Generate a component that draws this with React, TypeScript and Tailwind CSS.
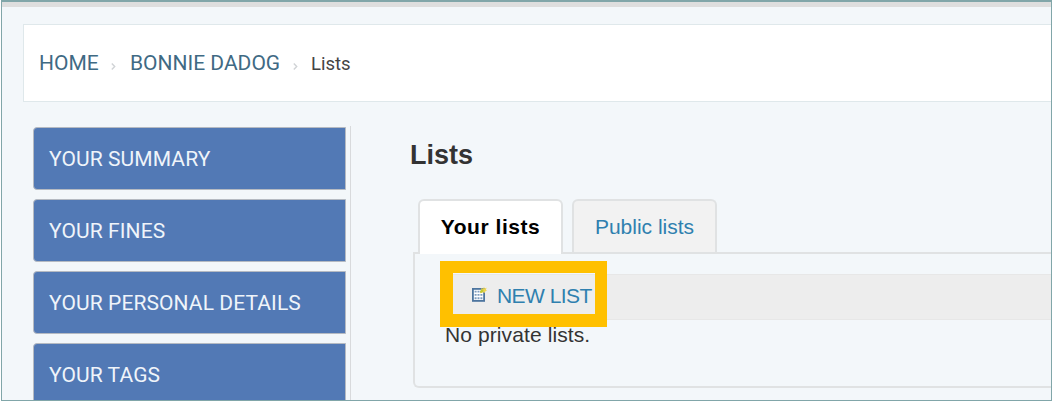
const menu = ['YOUR SUMMARY', 'YOUR FINES', 'YOUR PERSONAL DETAILS', 'YOUR TAGS'];

function NewListIcon() {
  return (
    <svg width="15" height="16" viewBox="0 0 15 16" className="mb-[3px] shrink-0">
      <rect x="0.9" y="2.9" width="11.2" height="12" fill="#fff" stroke="#4d759f" strokeWidth="1.8" />
      <path d="M2.6 5.6h7.8M2.6 8.9h7.8M2.6 12.2h7.8" stroke="#7f9dbf" strokeWidth="1.9" strokeDasharray="2 .9" />
      <path d="M9 2.2l2.2.6L12 .8l.7 1.7 1.9-.7-.7 2 1 1-1.8.6-.4 1.6-1.4-.7-2.7.9 1.1-2.5z" fill="#efd550" />
      <path d="M8 5.2l1.6-2 2 .6-.5 2-2.7 1.4z" fill="#c3c934" />
    </svg>
  );
}

function Chevron() {
  return (
    <svg width="5" height="7" viewBox="0 0 5 7" className="mt-[4px] shrink-0">
      <path d="M.8.6L3.7 3.5.8 6.4" fill="none" stroke="#d0d3d6" strokeWidth="1.4" />
    </svg>
  );
}

export default function App() {
  return (
    <div className="h-[402px] w-[1053px] overflow-hidden bg-white pr-px pb-px pl-px font-['Liberation_Sans',Arial,sans-serif]">
      <div className="flex h-[401px] flex-col overflow-hidden border border-t-2 border-[#81a6a9] bg-[#f3f7fa]">
        <div className="h-[5px] shrink-0 bg-[#dedede]" />
        <nav className="mt-[17px] ml-[21px] flex h-[78px] shrink-0 items-center border border-r-0 border-[#dfe8eb] bg-white pt-[2px] pl-[15px] font-[Roboto,sans-serif] text-[21px] text-[#3f6a84]">
          <span className="w-[72px]">HOME</span>
          <Chevron />
          <span className="ml-[14px] w-[163px] whitespace-nowrap">BONNIE DADOG</span>
          <Chevron />
          <span className="mt-px ml-[13px] text-[18.5px] text-[#444]">Lists</span>
        </nav>
        <div className="mt-[24px] flex min-h-0 flex-1">
          <aside className="ml-[31px] flex w-[318px] shrink-0 flex-col gap-[9px] border-r border-[#d8dadc] pt-[1px]">
            {menu.map((label) => (
              <a key={label} className="flex h-[63px] w-[313px] shrink-0 items-center rounded-l-[4px] border border-[#b5bac2] bg-[#5279b5] pt-[2px] pl-[15px] font-[Roboto,sans-serif] text-[21px] tracking-[0.1px] whitespace-nowrap text-[#eff4fa]">
                {label}
              </a>
            ))}
          </aside>
          <main className="ml-[59px] flex min-w-0 flex-1 flex-col">
            <h1 className="mt-[12px] h-[34px] text-[27px] leading-[34px] font-bold text-[#333]">Lists</h1>
            <div className="relative z-10 mt-[27px] ml-[8px] flex h-[54px] gap-[9px] text-[21px]">
              <div className="flex h-[55px] w-[145px] shrink-0 items-center justify-center rounded-t-[6px] border-2 border-b-0 border-[#e0e2e3] bg-white pb-px font-bold tracking-[0.55px] text-black">Your lists</div>
              <div className="flex h-[53px] w-[145px] shrink-0 items-center justify-center rounded-t-[6px] border-2 border-b-0 border-[#e0e2e3] bg-[#f2f2f2] pt-px text-[#2f80af]">Public lists</div>
            </div>
            <section className="relative mt-[-1px] ml-[3px] h-[136px] rounded-bl-[6px] border-2 border-r-0 border-[#e0e2e3] pt-[20px] pl-[29px]">
              <div className="flex h-[46px] items-center border-y border-[#e7e7e7] bg-[#ededed] pb-[3px] pl-[28px] text-[21px] text-[#2f80af]">
                <NewListIcon />
                <span className="mt-px ml-[10px] tracking-[-0.55px]">NEW LIST</span>
              </div>
              <p className="mt-[2px] pl-px text-[21px] leading-[26px] tracking-[0.1px] text-[#333]">No private lists.</p>
              <div className="absolute top-[7px] left-[25px] h-[66px] w-[167px] border-t-12 border-r-12 border-b-13 border-l-13 border-[#ffc000]" />
            </section>
          </main>
        </div>
      </div>
    </div>
  );
}
